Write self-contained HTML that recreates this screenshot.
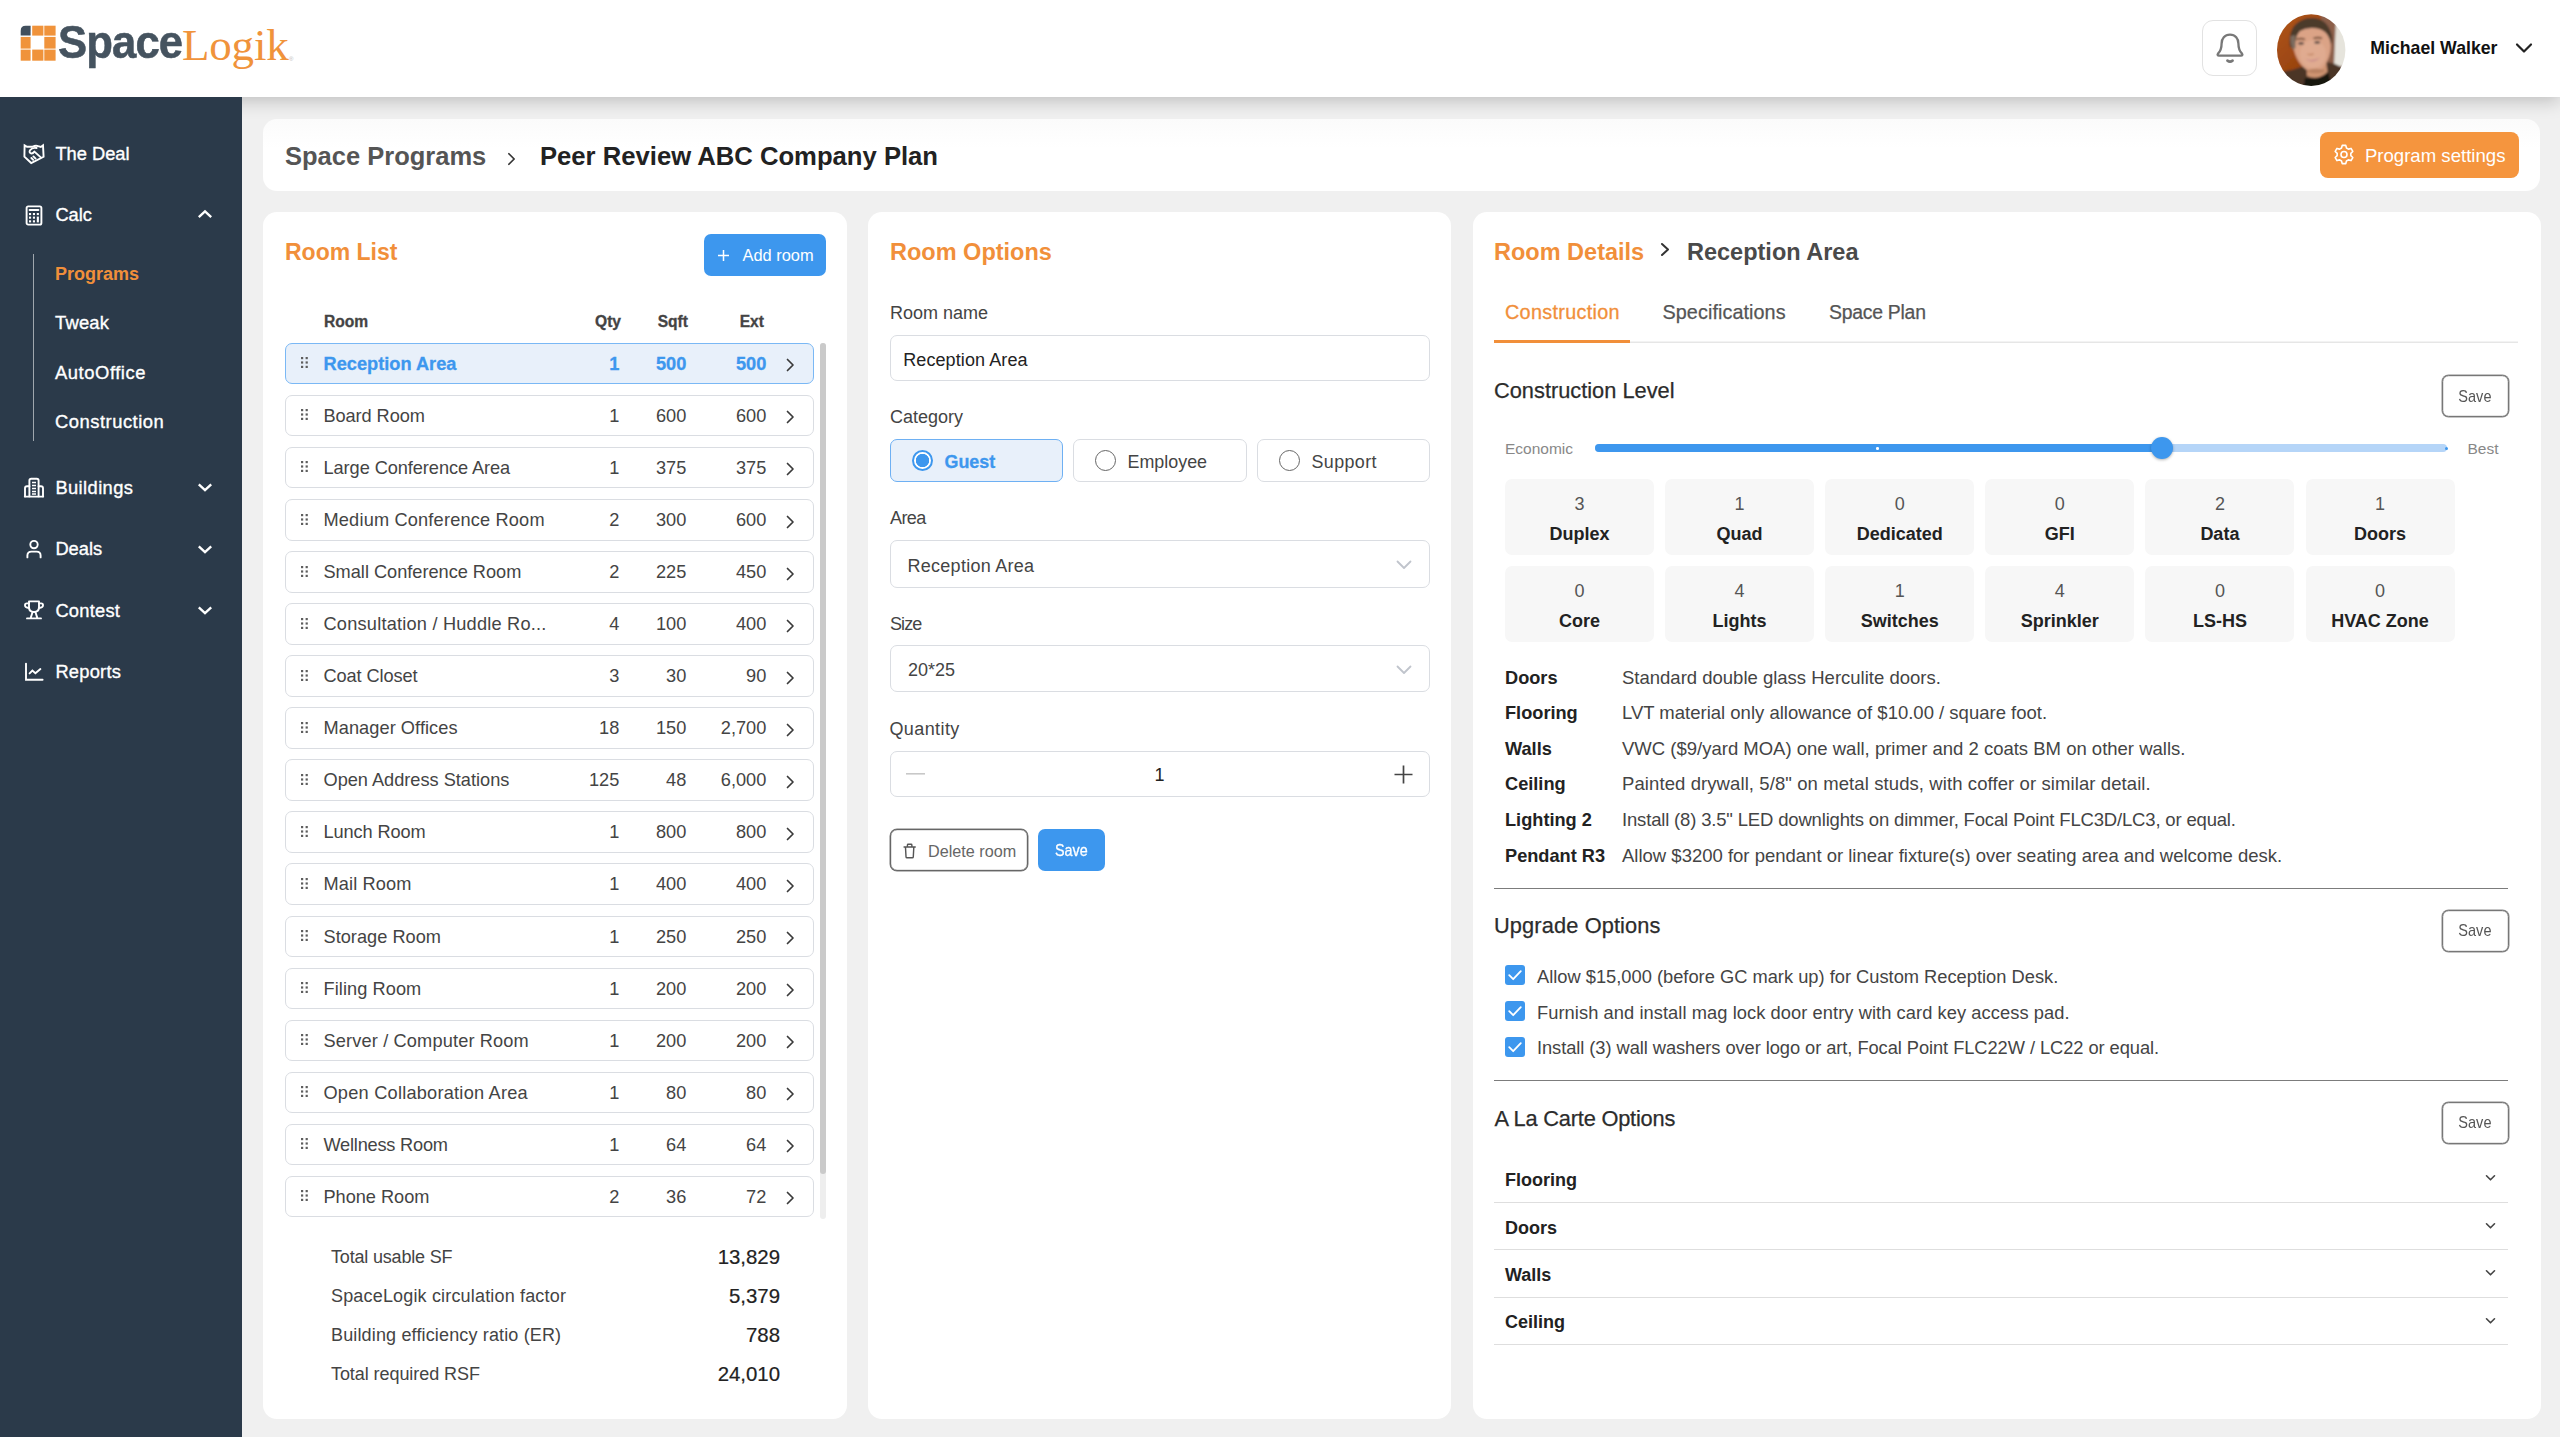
<!DOCTYPE html>
<html lang="en"><head><meta charset="utf-8"><title>SpaceLogik - Space Programs</title>
<style>
*{box-sizing:border-box;margin:0;padding:0}
html,body{width:2560px;height:1437px;overflow:hidden;background:#f0f0f0}
body{font-family:"Liberation Sans",sans-serif;color:#444;position:relative;font-size:18px}
.abs{position:absolute}
.t{position:absolute;white-space:nowrap;line-height:30px;height:30px}
#hdr{position:absolute;left:0;top:0;width:2560px;height:97px;background:#fff;box-shadow:0 4px 17px rgba(0,0,0,.21);z-index:5}
#side{position:absolute;left:0;top:97px;width:242px;height:1340px;background:#2b3a4a;z-index:6}
#side .mi{position:absolute;left:55.4px;color:#fff;font-size:18.3px;line-height:30px;height:30px;-webkit-text-stroke:.35px #fff;white-space:nowrap}
#side .sub{position:absolute;left:55px;color:#fff;font-size:18.4px;line-height:30px;height:30px;-webkit-text-stroke:.35px #fff;white-space:nowrap}
#side svg{position:absolute;overflow:visible}
.card{position:absolute;background:#fff;border-radius:14px}
.h1{position:absolute;font-weight:bold;font-size:23.5px;line-height:34px;height:34px;white-space:nowrap;color:#f18f3a}
.row{position:absolute;left:285px;width:529px;height:41.5px;border:1.5px solid #dadde2;border-radius:7px;background:#fff}
.row.sel{border-color:#7ab8f5;background:#e8f0fa;color:#3d97ee;font-weight:bold;-webkit-text-stroke:.3px #3d97ee}
.row div{position:absolute;top:0;line-height:41.6px;height:38px;white-space:nowrap;font-size:18.2px}
.row .nm{left:37.5px}
.row .q{right:193.7px}
.row .s{right:126.7px}
.row .e{right:46.7px}
.row svg{position:absolute}
.lbl{position:absolute;left:890px;font-size:18px;line-height:30px;height:30px;color:#444;white-space:nowrap}
.inp{position:absolute;left:890px;width:540px;border:1.5px solid #dadde2;border-radius:7px;background:#fff}
.radio{position:absolute;top:439px;height:43px;border:1.5px solid #dadde2;border-radius:7px;background:#fff}
.radio span{position:absolute;left:53.5px;top:0;line-height:44px;font-size:17.9px;white-space:nowrap;color:#444}
.radio i{position:absolute;left:21px;top:10px;width:21px;height:21px;border-radius:50%;border:1.5px solid #666;background:#fff}
.btnsave{position:absolute;width:67px;height:42px;border:1px solid #777;box-shadow:0 0 0 .5px #8c8c8c,inset 0 0 0 .3px #999;border-radius:6.5px;background:#fff;font-size:16.6px;line-height:40.4px;text-align:center;color:#555}
.btnsave span{display:inline-block;transform:scaleX(.875)}
.tile{position:absolute;width:149px;height:76px;background:#f7f7f7;border-radius:7px;text-align:center}
.tile b{position:absolute;left:0;right:0;top:40px;font-size:18px;line-height:30px;color:#222}
.tile span{position:absolute;left:0;right:0;top:10px;font-size:18px;line-height:30px;color:#555}
.spk{position:absolute;left:1505px;font-weight:bold;font-size:18.2px;line-height:30px;height:30px;color:#222;white-space:nowrap}
.spv{position:absolute;left:1622px;font-size:18.5px;line-height:30px;height:30px;color:#444;white-space:nowrap}
.hr{position:absolute;left:1494px;width:1014px;height:1.25px;background:#7c7c7c}
.h2{position:absolute;left:1494px;font-size:21.8px;line-height:32px;height:32px;color:#2c2c2c;white-space:nowrap;-webkit-text-stroke:.25px #2c2c2c}
.cb{position:absolute;left:1505px;width:20px;height:20px;border-radius:3px;background:#3d97ee}
.cbt{position:absolute;left:1537px;font-size:18.3px;margin-top:.8px;line-height:30px;height:30px;color:#444;white-space:nowrap}
.acc{position:absolute;left:1505px;font-weight:bold;font-size:18px;line-height:30px;height:30px;color:#222;white-space:nowrap}
.accl{position:absolute;left:1494px;width:1014px;height:1.3px;background:#dedede}
</style></head>
<body>
<div id="hdr"><svg class="abs" style="left:20px;top:25px" width="37" height="37" viewBox="0 0 37 37"><path d="M10.6 0.7 H5.7 Q0.7 0.7 0.7 5.7 V10.6 H10.6 Z" fill="#414f5d"/><rect x="12.2" y="0.7" width="11.20" height="9.90" fill="#f0933b"/><rect x="24.3" y="0.7" width="11.30" height="9.90" fill="#f0933b"/><rect x="0.7" y="11.9" width="9.90" height="11.70" fill="#f0933b"/><rect x="24.3" y="11.9" width="11.30" height="11.70" fill="#f0933b"/><rect x="0.7" y="24.6" width="9.90" height="11.10" fill="#f0933b"/><rect x="12.2" y="24.6" width="11.20" height="11.10" fill="#f0933b"/><rect x="24.3" y="24.6" width="11.30" height="11.10" fill="#f0933b"/></svg><div class="abs" style="left:57.5px;top:14px;font-size:46.5px;line-height:56px;font-weight:bold;color:#45535f;-webkit-text-stroke:.55px #45535f;letter-spacing:-.9px;transform:scaleX(.938);transform-origin:0 50%;white-space:nowrap">Space</div><div class="abs" style="left:182px;top:17px;font-family:'Liberation Serif',serif;font-size:45px;line-height:56px;color:#f0933b;letter-spacing:-.2px;white-space:nowrap">Logik</div><div class="abs" style="left:289px;top:55px;font-size:6px;line-height:8px;color:#bbb">&#174;</div><div class="abs" style="left:2202px;top:20px;width:55px;height:56px;border:1.5px solid #e2e2e2;border-radius:11px;background:#fff"></div><svg class="abs" style="left:2214px;top:31px" width="32" height="34" viewBox="0 0 32 34" fill="none" stroke="#787878" stroke-width="2.3" stroke-linecap="round" stroke-linejoin="round">
<path d="M16 3.6 C10.6 3.6 7.6 7.6 7.6 12.4 C7.6 17.6 6.6 20 4 22.6 C3.2 23.6 3.6 24.6 5 24.6 H27 C28.4 24.6 28.8 23.6 28 22.6 C25.4 20 24.4 17.6 24.4 12.4 C24.4 7.6 21.4 3.6 16 3.6 Z"/>
<path d="M13.4 29.6 Q16 31.6 18.6 29.6" stroke-width="2.6"/></svg><svg class="abs" style="left:2276px;top:14px" width="70" height="72" viewBox="0 0 70 72">
<defs><clipPath id="av"><ellipse cx="35.2" cy="36.1" rx="34.2" ry="35.9"/></clipPath>
<filter id="bl" x="-20%" y="-20%" width="140%" height="140%"><feGaussianBlur stdDeviation="1.1"/></filter>
<linearGradient id="bgl" x1="0" x2="1" y1="0" y2="1"><stop offset="0" stop-color="#b45a1c"/><stop offset=".5" stop-color="#9a4410"/><stop offset="1" stop-color="#84380a"/></linearGradient></defs>
<g clip-path="url(#av)"><g filter="url(#bl)">
<rect x="-5" y="-5" width="80" height="82" fill="url(#bgl)"/>
<path d="M44 -5 L80 -5 L80 56 L50 56 Z" fill="#8c5e4a"/>
<path d="M59.8 9 L80 9 L80 52 L58 52 Z" fill="#e6e4dc"/>
<path d="M-5 80 L-5 62 Q6 57 16 56 L31 51 L36 60 L50 48 Q60 49 66 54 L76 62 L76 80 Z" fill="#4c3628"/>
<path d="M29 64 Q40 66 52 58 L58 80 L26 80 Z" fill="#17120f"/>
<path d="M30.5 50 L50 47 L51.5 58 Q42 67 31 62 Z" fill="#cf9472"/>
<path d="M17 30 Q14 12 32 8 Q50 6 54 24 Q56 34 53 43 Q48 57 39 58.5 Q29 57.5 23 48 Q18 40 17 30 Z" fill="#dba386"/><ellipse cx="40" cy="57" rx="9" ry="2.2" fill="#b98262"/>
<ellipse cx="37" cy="40" rx="13" ry="14" fill="#e0ab90"/>
<path d="M14 33 Q11 10 30 4.5 Q50 1 55.5 20 Q57 26 55 30 Q53 19 45 15.5 Q33 12 24 17 Q19 22 19 34 Z" fill="#4b3a2c"/>
<path d="M14.5 22 Q14 30 17 36 L19.5 34 Q18.5 27 19.5 21 Z" fill="#7d6c5e"/>
<path d="M20.5 25.6 Q24.5 23.8 29 25.4 M37.5 24.6 Q42 22.8 46 24.4" stroke="#6a4630" stroke-width="1.6" fill="none"/>
<ellipse cx="25" cy="29.4" rx="3" ry="1.3" fill="#5d4c46"/><ellipse cx="41.2" cy="28.4" rx="3" ry="1.3" fill="#5d4c46"/>
<path d="M31.5 40 Q34 41.4 37.5 39.8" stroke="#c08460" stroke-width="1.4" fill="none"/>
<path d="M28.5 44.4 Q36 48 44 43.6 Q37 51 28.5 44.4Z" fill="#c98c8c"/>
</g></g></svg><div class="abs" style="left:2370.3px;top:33.2px;font-size:17.7px;line-height:30px;font-weight:bold;color:#111;white-space:nowrap">Michael Walker</div><svg class="abs" style="left:2515px;top:42px" width="18" height="12" viewBox="0 0 18 12" fill="none" stroke="#222" stroke-width="2.2" stroke-linecap="round" stroke-linejoin="round"><path d="M2 2.5 L9 9.5 L16 2.5"/></svg></div>
<div id="side"><div class="mi" style="top:41.5px">The Deal</div><div class="mi" style="top:103px">Calc</div><svg style="left:196.5px;top:112.1px" width="16" height="11" viewBox="0 0 16 10.5" fill="none" stroke="#fff" stroke-width="2.4" stroke-linecap="butt" stroke-linejoin="miter"><path d="M1.8 7.8 L8 2.2 L14.2 7.8"/></svg><div class="sub" style="top:161.5px;color:#f18f3a;font-weight:bold;-webkit-text-stroke:0;font-size:18px">Programs</div><div class="sub" style="top:210.5px;letter-spacing:.2px">Tweak</div><div class="sub" style="top:260.7px;letter-spacing:.55px">AutoOffice</div><div class="sub" style="top:309.5px;letter-spacing:.5px">Construction</div><div class="abs" style="left:32.5px;top:157px;width:1.5px;height:187px;background:rgba(255,255,255,.55)"></div><div class="mi" style="top:375.5px"><span style="letter-spacing:.42px">Buildings</span></div><svg style="left:196.5px;top:385.0px" width="16" height="11" viewBox="0 0 16 10.5" fill="none" stroke="#fff" stroke-width="2.4" stroke-linecap="butt" stroke-linejoin="miter"><path d="M1.8 2.2 L8 7.8 L14.2 2.2"/></svg><div class="mi" style="top:436.5px">Deals</div><svg style="left:196.5px;top:446.5px" width="16" height="11" viewBox="0 0 16 10.5" fill="none" stroke="#fff" stroke-width="2.4" stroke-linecap="butt" stroke-linejoin="miter"><path d="M1.8 2.2 L8 7.8 L14.2 2.2"/></svg><div class="mi" style="top:498.5px"><span style="letter-spacing:.25px">Contest</span></div><svg style="left:196.5px;top:507.79999999999995px" width="16" height="11" viewBox="0 0 16 10.5" fill="none" stroke="#fff" stroke-width="2.4" stroke-linecap="butt" stroke-linejoin="miter"><path d="M1.8 2.2 L8 7.8 L14.2 2.2"/></svg><div class="mi" style="top:560px"><span style="letter-spacing:.25px">Reports</span></div><svg style="left:23px;top:47px" width="22" height="20" viewBox="0 0 22 20" fill="none" stroke="#fff" stroke-width="1.9" stroke-linecap="round" stroke-linejoin="round">
<path d="M1.6 1.4 L4 2.8 L9.6 2.8 Q12.6 1 15.2 2.2 L17.8 3 L20 1.4 L20.6 12.8 L8.2 19 L1.4 12.6 Z" stroke-linejoin="miter"/>
<path d="M13.6 4 Q9.2 3.2 7 6.2 Q5.8 8.6 8 9.4 Q9.8 9.8 11.4 7.6 L17.8 13.4"/>
<path d="M10.4 12.4 L12.6 14.6 M8.4 14 L10.2 15.8"/></svg><svg style="left:25px;top:108px" width="18" height="21" viewBox="0 0 18 21" fill="none" stroke="#fff" stroke-width="1.9" stroke-linecap="round" stroke-linejoin="round">
<rect x="1.6" y="1.4" width="14.8" height="18.2" rx="1.6"/>
<path d="M4.6 5 H13.4" stroke-width="2"/>
<g stroke="none" fill="#fff"><rect x="4" y="8" width="2.1" height="2.1"/><rect x="7.9" y="8" width="2.1" height="2.1"/><rect x="11.8" y="8" width="2.1" height="2.1"/>
<rect x="4" y="11.6" width="2.1" height="2.1"/><rect x="7.9" y="11.6" width="2.1" height="2.1"/><rect x="11.8" y="11.6" width="2.1" height="5.8"/>
<rect x="4" y="15.3" width="2.1" height="2.1"/><rect x="7.9" y="15.3" width="2.1" height="2.1"/></g></svg><svg style="left:23px;top:380px" width="22" height="21" viewBox="0 0 22 21" fill="none" stroke="#fff" stroke-width="1.9" stroke-linecap="round" stroke-linejoin="round">
<path d="M6.4 19.4 V3.6 Q6.4 1.8 8.2 1.8 H13.8 Q15.6 1.8 15.6 3.6 V19.4"/>
<path d="M6.4 9.2 H4 Q2 9.2 2 11.2 V19.4 M15.6 9.2 H18 Q20 9.2 20 11.2 V19.4"/>
<path d="M1.8 19.6 H20.2"/>
<path d="M9 5.4 H13 M9 8.4 H13 M9 11.4 H13 M9 14.4 H13 M9 17 H13" stroke-width="1.5" stroke-linecap="butt"/></svg><svg style="left:25px;top:442px" width="18" height="20" viewBox="0 0 18 20" fill="none" stroke="#fff" stroke-width="1.9" stroke-linecap="round" stroke-linejoin="round">
<circle cx="9" cy="5.6" r="3.7"/><path d="M2.4 18.4 V16.6 Q2.4 12.6 6.4 12.6 H11.6 Q15.6 12.6 15.6 16.6 V18.4"/></svg><svg style="left:23px;top:502px" width="22" height="22" viewBox="0 0 22 22" fill="none" stroke="#fff" stroke-width="1.9" stroke-linecap="round" stroke-linejoin="round">
<path d="M6 2.4 H16 V8 Q16 13 11 13 Q6 13 6 8 Z"/>
<path d="M6 4.4 H3.8 Q2 4.4 2 6.2 Q2 8.6 6 9 M16 4.4 H18.2 Q20 4.4 20 6.2 Q20 8.6 16 9"/>
<path d="M9.6 13 L7.8 18.6 M12.4 13 L14.2 18.6 M4 19.4 H18"/></svg><svg style="left:24px;top:565px" width="20" height="20" viewBox="0 0 20 20" fill="none" stroke="#fff" stroke-width="1.9" stroke-linecap="round" stroke-linejoin="round">
<path d="M2 1.6 V17.8 H18.6" stroke-linejoin="miter"/><path d="M5.6 11.4 L8.4 8.6 L11.4 11.2 L16.4 7" stroke-linejoin="miter"/></svg></div>
<div class="card" style="left:263px;top:118.6px;width:2277px;height:72.6px;background:linear-gradient(#fbfbfb,#fff 40%)"></div>
<div class="abs" style="left:285px;top:138.6px;font-size:25.5px;line-height:34px;font-weight:bold;color:#555;white-space:nowrap">Space Programs</div>
<svg class="abs" style="left:507px;top:151.5px" width="9" height="14" viewBox="0 0 10 16" fill="none" stroke="#333" stroke-width="2" stroke-linecap="round" stroke-linejoin="round"><path d="M2 2 L8 8 L2 14"/></svg>
<div class="abs" style="left:540px;top:138.6px;font-size:25.65px;line-height:34px;font-weight:bold;color:#222;white-space:nowrap">Peer Review ABC Company Plan</div>
<div class="abs" style="left:2320px;top:132px;width:199px;height:46px;border-radius:8px;background:#f5953e"></div>
<svg class="abs" style="left:2333.7px;top:144.2px" width="20" height="21" viewBox="0 0 20 21" fill="none" stroke="#fff" stroke-width="1.6" stroke-linejoin="round">
<path d="M7.53 4.06 L8.23 1.37 L11.77 1.37 L12.47 4.06 L14.34 5.14 L17.02 4.40 L18.79 7.47 L16.82 9.42 L16.82 11.58 L18.79 13.53 L17.02 16.60 L14.34 15.86 L12.47 16.94 L11.77 19.63 L8.23 19.63 L7.53 16.94 L5.66 15.86 L2.98 16.60 L1.21 13.53 L3.18 11.58 L3.18 9.42 L1.21 7.47 L2.98 4.40 L5.66 5.14 Z"/><circle cx="10" cy="10.5" r="3"/></svg>
<div class="abs" style="left:2364.9px;top:140px;font-size:18.6px;line-height:32px;color:#fff;white-space:nowrap">Program settings</div>
<div class="card" style="left:263px;top:212.3px;width:584px;height:1207px"></div>
<div class="h1" style="left:285px;top:234.8px;font-size:23px">Room List</div>
<div class="abs" style="left:703.5px;top:234px;width:122px;height:42px;border-radius:7px;background:#3d97ee"></div>
<svg class="abs" style="left:717px;top:249px" width="13" height="13" viewBox="0 0 13 13" stroke="#fff" stroke-width="1.5"><path d="M6.5 1 V12 M1 6.5 H12"/></svg>
<div class="abs" style="left:742.5px;top:240px;font-size:16.4px;line-height:30px;color:#fff;white-space:nowrap">Add room</div>
<div class="t" style="left:324px;top:307.0px;font-weight:bold;font-size:15.6px;color:#444;-webkit-text-stroke:.3px #444">Room</div>
<div class="t" style="left:520px;width:101px;text-align:right;top:307px;font-weight:bold;font-size:15.6px;color:#444;-webkit-text-stroke:.3px #444">Qty</div>
<div class="t" style="left:588px;width:100px;text-align:right;top:307px;font-weight:bold;font-size:15.6px;color:#444;-webkit-text-stroke:.3px #444">Sqft</div>
<div class="t" style="left:664px;width:100px;text-align:right;top:307px;font-weight:bold;font-size:15.6px;color:#444;-webkit-text-stroke:.3px #444">Ext</div>
<div class="row sel" style="top:342.8px"><svg style="left:15px;top:13.5px" width="7" height="11" viewBox="0 0 7 11" fill="#5e5e5e"><rect x="0" y="0" width="2.2" height="2.2"/><rect x="0" y="4.4" width="2.2" height="2.2"/><rect x="0" y="8.8" width="2.2" height="2.2"/><rect x="4.6" y="0" width="2.2" height="2.2"/><rect x="4.6" y="4.4" width="2.2" height="2.2"/><rect x="4.6" y="8.8" width="2.2" height="2.2"/></svg><div class="nm" style="letter-spacing:0.014px">Reception Area</div><div class="q">1</div><div class="s">500</div><div class="e">500</div><svg style="left:500px;top:14.5px" width="9" height="14" viewBox="0 0 9 14" fill="none" stroke="#3a3a3a" stroke-width="1.7" stroke-linecap="round" stroke-linejoin="round"><path d="M1.5 1.5 L7 7 L1.5 12.5"/></svg></div>
<div class="row" style="top:394.9px"><svg style="left:15px;top:13.5px" width="7" height="11" viewBox="0 0 7 11" fill="#5e5e5e"><rect x="0" y="0" width="2.2" height="2.2"/><rect x="0" y="4.4" width="2.2" height="2.2"/><rect x="0" y="8.8" width="2.2" height="2.2"/><rect x="4.6" y="0" width="2.2" height="2.2"/><rect x="4.6" y="4.4" width="2.2" height="2.2"/><rect x="4.6" y="8.8" width="2.2" height="2.2"/></svg><div class="nm" style="letter-spacing:-0.08px">Board Room</div><div class="q">1</div><div class="s">600</div><div class="e">600</div><svg style="left:500px;top:14.5px" width="9" height="14" viewBox="0 0 9 14" fill="none" stroke="#3a3a3a" stroke-width="1.7" stroke-linecap="round" stroke-linejoin="round"><path d="M1.5 1.5 L7 7 L1.5 12.5"/></svg></div>
<div class="row" style="top:446.9px"><svg style="left:15px;top:13.5px" width="7" height="11" viewBox="0 0 7 11" fill="#5e5e5e"><rect x="0" y="0" width="2.2" height="2.2"/><rect x="0" y="4.4" width="2.2" height="2.2"/><rect x="0" y="8.8" width="2.2" height="2.2"/><rect x="4.6" y="0" width="2.2" height="2.2"/><rect x="4.6" y="4.4" width="2.2" height="2.2"/><rect x="4.6" y="8.8" width="2.2" height="2.2"/></svg><div class="nm" style="letter-spacing:-0.067px">Large Conference Area</div><div class="q">1</div><div class="s">375</div><div class="e">375</div><svg style="left:500px;top:14.5px" width="9" height="14" viewBox="0 0 9 14" fill="none" stroke="#3a3a3a" stroke-width="1.7" stroke-linecap="round" stroke-linejoin="round"><path d="M1.5 1.5 L7 7 L1.5 12.5"/></svg></div>
<div class="row" style="top:499.0px"><svg style="left:15px;top:13.5px" width="7" height="11" viewBox="0 0 7 11" fill="#5e5e5e"><rect x="0" y="0" width="2.2" height="2.2"/><rect x="0" y="4.4" width="2.2" height="2.2"/><rect x="0" y="8.8" width="2.2" height="2.2"/><rect x="4.6" y="0" width="2.2" height="2.2"/><rect x="4.6" y="4.4" width="2.2" height="2.2"/><rect x="4.6" y="8.8" width="2.2" height="2.2"/></svg><div class="nm" style="letter-spacing:0.177px">Medium Conference Room</div><div class="q">2</div><div class="s">300</div><div class="e">600</div><svg style="left:500px;top:14.5px" width="9" height="14" viewBox="0 0 9 14" fill="none" stroke="#3a3a3a" stroke-width="1.7" stroke-linecap="round" stroke-linejoin="round"><path d="M1.5 1.5 L7 7 L1.5 12.5"/></svg></div>
<div class="row" style="top:551.0px"><svg style="left:15px;top:13.5px" width="7" height="11" viewBox="0 0 7 11" fill="#5e5e5e"><rect x="0" y="0" width="2.2" height="2.2"/><rect x="0" y="4.4" width="2.2" height="2.2"/><rect x="0" y="8.8" width="2.2" height="2.2"/><rect x="4.6" y="0" width="2.2" height="2.2"/><rect x="4.6" y="4.4" width="2.2" height="2.2"/><rect x="4.6" y="8.8" width="2.2" height="2.2"/></svg><div class="nm" style="letter-spacing:-0.014px">Small Conference Room</div><div class="q">2</div><div class="s">225</div><div class="e">450</div><svg style="left:500px;top:14.5px" width="9" height="14" viewBox="0 0 9 14" fill="none" stroke="#3a3a3a" stroke-width="1.7" stroke-linecap="round" stroke-linejoin="round"><path d="M1.5 1.5 L7 7 L1.5 12.5"/></svg></div>
<div class="row" style="top:603.1px"><svg style="left:15px;top:13.5px" width="7" height="11" viewBox="0 0 7 11" fill="#5e5e5e"><rect x="0" y="0" width="2.2" height="2.2"/><rect x="0" y="4.4" width="2.2" height="2.2"/><rect x="0" y="8.8" width="2.2" height="2.2"/><rect x="4.6" y="0" width="2.2" height="2.2"/><rect x="4.6" y="4.4" width="2.2" height="2.2"/><rect x="4.6" y="8.8" width="2.2" height="2.2"/></svg><div class="nm" style="letter-spacing:0.211px">Consultation / Huddle Ro...</div><div class="q">4</div><div class="s">100</div><div class="e">400</div><svg style="left:500px;top:14.5px" width="9" height="14" viewBox="0 0 9 14" fill="none" stroke="#3a3a3a" stroke-width="1.7" stroke-linecap="round" stroke-linejoin="round"><path d="M1.5 1.5 L7 7 L1.5 12.5"/></svg></div>
<div class="row" style="top:655.2px"><svg style="left:15px;top:13.5px" width="7" height="11" viewBox="0 0 7 11" fill="#5e5e5e"><rect x="0" y="0" width="2.2" height="2.2"/><rect x="0" y="4.4" width="2.2" height="2.2"/><rect x="0" y="8.8" width="2.2" height="2.2"/><rect x="4.6" y="0" width="2.2" height="2.2"/><rect x="4.6" y="4.4" width="2.2" height="2.2"/><rect x="4.6" y="8.8" width="2.2" height="2.2"/></svg><div class="nm" style="letter-spacing:-0.091px">Coat Closet</div><div class="q">3</div><div class="s">30</div><div class="e">90</div><svg style="left:500px;top:14.5px" width="9" height="14" viewBox="0 0 9 14" fill="none" stroke="#3a3a3a" stroke-width="1.7" stroke-linecap="round" stroke-linejoin="round"><path d="M1.5 1.5 L7 7 L1.5 12.5"/></svg></div>
<div class="row" style="top:707.2px"><svg style="left:15px;top:13.5px" width="7" height="11" viewBox="0 0 7 11" fill="#5e5e5e"><rect x="0" y="0" width="2.2" height="2.2"/><rect x="0" y="4.4" width="2.2" height="2.2"/><rect x="0" y="8.8" width="2.2" height="2.2"/><rect x="4.6" y="0" width="2.2" height="2.2"/><rect x="4.6" y="4.4" width="2.2" height="2.2"/><rect x="4.6" y="8.8" width="2.2" height="2.2"/></svg><div class="nm" style="letter-spacing:0.067px">Manager Offices</div><div class="q">18</div><div class="s">150</div><div class="e">2,700</div><svg style="left:500px;top:14.5px" width="9" height="14" viewBox="0 0 9 14" fill="none" stroke="#3a3a3a" stroke-width="1.7" stroke-linecap="round" stroke-linejoin="round"><path d="M1.5 1.5 L7 7 L1.5 12.5"/></svg></div>
<div class="row" style="top:759.3px"><svg style="left:15px;top:13.5px" width="7" height="11" viewBox="0 0 7 11" fill="#5e5e5e"><rect x="0" y="0" width="2.2" height="2.2"/><rect x="0" y="4.4" width="2.2" height="2.2"/><rect x="0" y="8.8" width="2.2" height="2.2"/><rect x="4.6" y="0" width="2.2" height="2.2"/><rect x="4.6" y="4.4" width="2.2" height="2.2"/><rect x="4.6" y="8.8" width="2.2" height="2.2"/></svg><div class="nm" style="letter-spacing:-0.01px">Open Address Stations</div><div class="q">125</div><div class="s">48</div><div class="e">6,000</div><svg style="left:500px;top:14.5px" width="9" height="14" viewBox="0 0 9 14" fill="none" stroke="#3a3a3a" stroke-width="1.7" stroke-linecap="round" stroke-linejoin="round"><path d="M1.5 1.5 L7 7 L1.5 12.5"/></svg></div>
<div class="row" style="top:811.3px"><svg style="left:15px;top:13.5px" width="7" height="11" viewBox="0 0 7 11" fill="#5e5e5e"><rect x="0" y="0" width="2.2" height="2.2"/><rect x="0" y="4.4" width="2.2" height="2.2"/><rect x="0" y="8.8" width="2.2" height="2.2"/><rect x="4.6" y="0" width="2.2" height="2.2"/><rect x="4.6" y="4.4" width="2.2" height="2.2"/><rect x="4.6" y="8.8" width="2.2" height="2.2"/></svg><div class="nm" style="letter-spacing:-0.11px">Lunch Room</div><div class="q">1</div><div class="s">800</div><div class="e">800</div><svg style="left:500px;top:14.5px" width="9" height="14" viewBox="0 0 9 14" fill="none" stroke="#3a3a3a" stroke-width="1.7" stroke-linecap="round" stroke-linejoin="round"><path d="M1.5 1.5 L7 7 L1.5 12.5"/></svg></div>
<div class="row" style="top:863.4px"><svg style="left:15px;top:13.5px" width="7" height="11" viewBox="0 0 7 11" fill="#5e5e5e"><rect x="0" y="0" width="2.2" height="2.2"/><rect x="0" y="4.4" width="2.2" height="2.2"/><rect x="0" y="8.8" width="2.2" height="2.2"/><rect x="4.6" y="0" width="2.2" height="2.2"/><rect x="4.6" y="4.4" width="2.2" height="2.2"/><rect x="4.6" y="8.8" width="2.2" height="2.2"/></svg><div class="nm" style="letter-spacing:0.122px">Mail Room</div><div class="q">1</div><div class="s">400</div><div class="e">400</div><svg style="left:500px;top:14.5px" width="9" height="14" viewBox="0 0 9 14" fill="none" stroke="#3a3a3a" stroke-width="1.7" stroke-linecap="round" stroke-linejoin="round"><path d="M1.5 1.5 L7 7 L1.5 12.5"/></svg></div>
<div class="row" style="top:915.5px"><svg style="left:15px;top:13.5px" width="7" height="11" viewBox="0 0 7 11" fill="#5e5e5e"><rect x="0" y="0" width="2.2" height="2.2"/><rect x="0" y="4.4" width="2.2" height="2.2"/><rect x="0" y="8.8" width="2.2" height="2.2"/><rect x="4.6" y="0" width="2.2" height="2.2"/><rect x="4.6" y="4.4" width="2.2" height="2.2"/><rect x="4.6" y="8.8" width="2.2" height="2.2"/></svg><div class="nm" style="letter-spacing:0.021px">Storage Room</div><div class="q">1</div><div class="s">250</div><div class="e">250</div><svg style="left:500px;top:14.5px" width="9" height="14" viewBox="0 0 9 14" fill="none" stroke="#3a3a3a" stroke-width="1.7" stroke-linecap="round" stroke-linejoin="round"><path d="M1.5 1.5 L7 7 L1.5 12.5"/></svg></div>
<div class="row" style="top:967.5px"><svg style="left:15px;top:13.5px" width="7" height="11" viewBox="0 0 7 11" fill="#5e5e5e"><rect x="0" y="0" width="2.2" height="2.2"/><rect x="0" y="4.4" width="2.2" height="2.2"/><rect x="0" y="8.8" width="2.2" height="2.2"/><rect x="4.6" y="0" width="2.2" height="2.2"/><rect x="4.6" y="4.4" width="2.2" height="2.2"/><rect x="4.6" y="8.8" width="2.2" height="2.2"/></svg><div class="nm" style="letter-spacing:0.068px">Filing Room</div><div class="q">1</div><div class="s">200</div><div class="e">200</div><svg style="left:500px;top:14.5px" width="9" height="14" viewBox="0 0 9 14" fill="none" stroke="#3a3a3a" stroke-width="1.7" stroke-linecap="round" stroke-linejoin="round"><path d="M1.5 1.5 L7 7 L1.5 12.5"/></svg></div>
<div class="row" style="top:1019.6px"><svg style="left:15px;top:13.5px" width="7" height="11" viewBox="0 0 7 11" fill="#5e5e5e"><rect x="0" y="0" width="2.2" height="2.2"/><rect x="0" y="4.4" width="2.2" height="2.2"/><rect x="0" y="8.8" width="2.2" height="2.2"/><rect x="4.6" y="0" width="2.2" height="2.2"/><rect x="4.6" y="4.4" width="2.2" height="2.2"/><rect x="4.6" y="8.8" width="2.2" height="2.2"/></svg><div class="nm" style="letter-spacing:0.148px">Server / Computer Room</div><div class="q">1</div><div class="s">200</div><div class="e">200</div><svg style="left:500px;top:14.5px" width="9" height="14" viewBox="0 0 9 14" fill="none" stroke="#3a3a3a" stroke-width="1.7" stroke-linecap="round" stroke-linejoin="round"><path d="M1.5 1.5 L7 7 L1.5 12.5"/></svg></div>
<div class="row" style="top:1071.6px"><svg style="left:15px;top:13.5px" width="7" height="11" viewBox="0 0 7 11" fill="#5e5e5e"><rect x="0" y="0" width="2.2" height="2.2"/><rect x="0" y="4.4" width="2.2" height="2.2"/><rect x="0" y="8.8" width="2.2" height="2.2"/><rect x="4.6" y="0" width="2.2" height="2.2"/><rect x="4.6" y="4.4" width="2.2" height="2.2"/><rect x="4.6" y="8.8" width="2.2" height="2.2"/></svg><div class="nm" style="letter-spacing:0.228px">Open Collaboration Area</div><div class="q">1</div><div class="s">80</div><div class="e">80</div><svg style="left:500px;top:14.5px" width="9" height="14" viewBox="0 0 9 14" fill="none" stroke="#3a3a3a" stroke-width="1.7" stroke-linecap="round" stroke-linejoin="round"><path d="M1.5 1.5 L7 7 L1.5 12.5"/></svg></div>
<div class="row" style="top:1123.7px"><svg style="left:15px;top:13.5px" width="7" height="11" viewBox="0 0 7 11" fill="#5e5e5e"><rect x="0" y="0" width="2.2" height="2.2"/><rect x="0" y="4.4" width="2.2" height="2.2"/><rect x="0" y="8.8" width="2.2" height="2.2"/><rect x="4.6" y="0" width="2.2" height="2.2"/><rect x="4.6" y="4.4" width="2.2" height="2.2"/><rect x="4.6" y="8.8" width="2.2" height="2.2"/></svg><div class="nm" style="letter-spacing:-0.215px">Wellness Room</div><div class="q">1</div><div class="s">64</div><div class="e">64</div><svg style="left:500px;top:14.5px" width="9" height="14" viewBox="0 0 9 14" fill="none" stroke="#3a3a3a" stroke-width="1.7" stroke-linecap="round" stroke-linejoin="round"><path d="M1.5 1.5 L7 7 L1.5 12.5"/></svg></div>
<div class="row" style="top:1175.8px"><svg style="left:15px;top:13.5px" width="7" height="11" viewBox="0 0 7 11" fill="#5e5e5e"><rect x="0" y="0" width="2.2" height="2.2"/><rect x="0" y="4.4" width="2.2" height="2.2"/><rect x="0" y="8.8" width="2.2" height="2.2"/><rect x="4.6" y="0" width="2.2" height="2.2"/><rect x="4.6" y="4.4" width="2.2" height="2.2"/><rect x="4.6" y="8.8" width="2.2" height="2.2"/></svg><div class="nm" style="letter-spacing:-0.03px">Phone Room</div><div class="q">2</div><div class="s">36</div><div class="e">72</div><svg style="left:500px;top:14.5px" width="9" height="14" viewBox="0 0 9 14" fill="none" stroke="#3a3a3a" stroke-width="1.7" stroke-linecap="round" stroke-linejoin="round"><path d="M1.5 1.5 L7 7 L1.5 12.5"/></svg></div>
<div class="abs" style="left:819.7px;top:343px;width:6px;height:876px;background:#eee;border-radius:3px"></div>
<div class="abs" style="left:819.7px;top:343px;width:6px;height:831px;background:#cacaca;border-radius:3px"></div>
<div class="t" style="left:331px;top:1242.0px;font-size:18px;color:#444;letter-spacing:-0.18px">Total usable SF</div>
<div class="t" style="left:600px;width:180px;text-align:right;top:1242px;font-size:20.4px;color:#222;-webkit-text-stroke:.2px #222">13,829</div>
<div class="t" style="left:331px;top:1281.0px;font-size:18px;color:#444;letter-spacing:0.17px">SpaceLogik circulation factor</div>
<div class="t" style="left:600px;width:180px;text-align:right;top:1281px;font-size:20.4px;color:#222;-webkit-text-stroke:.2px #222">5,379</div>
<div class="t" style="left:331px;top:1320.0px;font-size:18px;color:#444;letter-spacing:0.15px">Building efficiency ratio (ER)</div>
<div class="t" style="left:600px;width:180px;text-align:right;top:1320px;font-size:20.4px;color:#222;-webkit-text-stroke:.2px #222">788</div>
<div class="t" style="left:331px;top:1359.0px;font-size:18px;color:#444;letter-spacing:-0.07px">Total required RSF</div>
<div class="t" style="left:600px;width:180px;text-align:right;top:1359px;font-size:20.4px;color:#222;-webkit-text-stroke:.2px #222">24,010</div>
<div class="card" style="left:868px;top:212.3px;width:583px;height:1207px"></div>
<div class="h1" style="left:890px;top:234.8px">Room Options</div>
<div class="lbl" style="top:298px">Room name</div>
<div class="inp" style="top:334.5px;height:46px"></div>
<div class="t" style="left:903.2px;top:344.9px;font-size:18px;color:#222;letter-spacing:.1px">Reception Area</div>
<div class="lbl" style="top:402px">Category</div>
<div class="radio" style="left:890px;width:172.8px;border-color:#6eb0f3;background:#e8f0fa"><i style="border-width:2px;border-color:#3d97ee;background:radial-gradient(circle,#3d97ee 0 6.3px,#fff 7px)"></i><span style="color:#3d97ee;font-weight:bold;-webkit-text-stroke:.3px #3d97ee">Guest</span></div>
<div class="radio" style="left:1073px;width:173.6px"><i></i><span>Employee</span></div>
<div class="radio" style="left:1257px;width:173px"><i></i><span style="letter-spacing:.38px">Support</span></div>
<div class="lbl" style="top:503px;letter-spacing:-.6px">Area</div>
<div class="inp" style="top:540px;height:47.5px"></div>
<div class="t" style="left:907.6px;top:550.9px;font-size:18px;color:#444;letter-spacing:.25px">Reception Area</div>
<svg class="abs" style="left:1396px;top:560px" width="16" height="10" viewBox="0 0 16 10" fill="none" stroke="#c0c4cc" stroke-width="1.8" stroke-linecap="round" stroke-linejoin="round"><path d="M1.5 1.5 L8 8 L14.5 1.5"/></svg>
<div class="lbl" style="top:609px;letter-spacing:-.9px">Size</div>
<div class="inp" style="top:644.8px;height:47.5px"></div>
<div class="t" style="left:908px;top:655.0px;font-size:18px;color:#444">20*25</div>
<svg class="abs" style="left:1396px;top:665px" width="16" height="10" viewBox="0 0 16 10" fill="none" stroke="#c0c4cc" stroke-width="1.8" stroke-linecap="round" stroke-linejoin="round"><path d="M1.5 1.5 L8 8 L14.5 1.5"/></svg>
<div class="lbl" style="top:714px;left:889.4px;letter-spacing:.42px">Quantity</div>
<div class="inp" style="top:751px;height:45.5px"></div>
<svg class="abs" style="left:906px;top:773px" width="19" height="2" viewBox="0 0 19 2"><rect width="19" height="1.6" fill="#c8c8c8"/></svg>
<svg class="abs" style="left:1394px;top:764.5px" width="19" height="19" viewBox="0 0 19 19" stroke="#444" stroke-width="1.7"><path d="M9.5 .5 V18.5 M.5 9.5 H18.5"/></svg>
<div class="t" style="left:1154.5px;top:760.0px;font-size:18px;color:#222">1</div>
<div class="abs" style="left:890px;top:829px;width:138px;height:42px;border:1px solid #666;box-shadow:0 0 0 .5px #7a7a7a,inset 0 0 0 .3px #999;border-radius:7px;background:#fff"></div>
<svg class="abs" style="left:903px;top:842.5px" width="13.3" height="16" viewBox="0 0 15 18" fill="none" stroke="#555" stroke-width="1.6" stroke-linejoin="round" stroke-linecap="round"><path d="M1.2 4.4 H13.8 M5 4 V2.2 Q5 1.4 5.8 1.4 H9.2 Q10 1.4 10 2.2 V4 M2.8 4.6 L3.4 15.6 Q3.5 16.6 4.5 16.6 H10.5 Q11.5 16.6 11.6 15.6 L12.2 4.6"/></svg>
<div class="t" style="left:928px;top:835.5px;font-size:16.2px;color:#666">Delete room</div>
<div class="abs" style="left:1038px;top:829px;width:67px;height:42px;border-radius:7px;background:#3d97ee"></div>
<div class="t" style="left:1054.8px;top:836.2px;font-size:16.6px;transform:scaleX(.865);transform-origin:0 50%;color:#fff;-webkit-text-stroke:.3px #fff">Save</div>
<div class="card" style="left:1473px;top:212.3px;width:1067.8px;height:1207px"></div>
<div class="h1" style="left:1494px;top:234.8px">Room Details</div>
<svg class="abs" style="left:1660px;top:242px" width="10" height="15" viewBox="0 0 10 15" fill="none" stroke="#333" stroke-width="2" stroke-linecap="round" stroke-linejoin="round"><path d="M2 2 L8 7.5 L2 13"/></svg>
<div class="h1" style="left:1687px;top:234.8px;color:#4a4a4a">Reception Area</div>
<div class="abs" style="left:1494px;top:341px;width:1024px;height:2px;background:linear-gradient(#f3f3f3 0 50%,#e6e6e6 50% 100%)"></div>
<div class="abs" style="left:1494px;top:340px;width:136px;height:3px;background:#f18f3a"></div>
<div class="t" style="left:1505px;top:297.0px;font-size:19.8px;letter-spacing:.32px;color:#f18f3a;-webkit-text-stroke:.3px #f18f3a">Construction</div>
<div class="t" style="left:1662.5px;top:297.0px;font-size:19.8px;letter-spacing:.08px;color:#555;-webkit-text-stroke:.25px #555">Specifications</div>
<div class="t" style="left:1829px;top:297.0px;font-size:19.4px;letter-spacing:-.25px;color:#555;-webkit-text-stroke:.25px #555">Space Plan</div>
<div class="h2" style="top:375px">Construction Level</div>
<div class="btnsave" style="left:2441.7px;top:375px;line-height:42px"><span>Save</span></div>
<div class="t" style="left:1505px;top:433.5px;font-size:15.5px;color:#888">Economic</div>
<div class="abs" style="left:1595px;top:444px;width:852px;height:8px;border-radius:4px;background:#b5d5f8"></div>
<div class="abs" style="left:1595px;top:444px;width:566px;height:8px;border-radius:4px;background:#3d97ee"></div>
<div class="abs" style="left:2150.7px;top:437px;width:22px;height:22px;border-radius:50%;background:#3d97ee;box-shadow:0 1px 3px rgba(0,0,0,.3)"></div>
<div class="abs" style="left:1876px;top:447px;width:2.5px;height:2.5px;border-radius:50%;background:#fff"></div>
<div class="abs" style="left:2444.5px;top:446.5px;width:3px;height:3px;border-radius:50%;background:#3d97ee"></div>
<div class="t" style="left:2467.5px;top:433.5px;font-size:15.5px;color:#888">Best</div>
<div class="tile" style="left:1505.0px;top:478.7px"><span>3</span><b>Duplex</b></div>
<div class="tile" style="left:1665.1px;top:478.7px"><span>1</span><b>Quad</b></div>
<div class="tile" style="left:1825.2px;top:478.7px"><span>0</span><b>Dedicated</b></div>
<div class="tile" style="left:1985.3px;top:478.7px"><span>0</span><b>GFI</b></div>
<div class="tile" style="left:2145.4px;top:478.7px"><span>2</span><b>Data</b></div>
<div class="tile" style="left:2305.5px;top:478.7px"><span>1</span><b>Doors</b></div>
<div class="tile" style="left:1505.0px;top:565.7px"><span>0</span><b>Core</b></div>
<div class="tile" style="left:1665.1px;top:565.7px"><span>4</span><b>Lights</b></div>
<div class="tile" style="left:1825.2px;top:565.7px"><span>1</span><b>Switches</b></div>
<div class="tile" style="left:1985.3px;top:565.7px"><span>4</span><b>Sprinkler</b></div>
<div class="tile" style="left:2145.4px;top:565.7px"><span>0</span><b>LS-HS</b></div>
<div class="tile" style="left:2305.5px;top:565.7px"><span>0</span><b>HVAC Zone</b></div>
<div class="spk" style="top:662.5px">Doors</div><div class="spv" style="top:662.5px;letter-spacing:0px">Standard double glass Herculite doors.</div>
<div class="spk" style="top:698.1px">Flooring</div><div class="spv" style="top:698.1px;letter-spacing:0px">LVT material only allowance of $10.00 / square foot.</div>
<div class="spk" style="top:733.7px">Walls</div><div class="spv" style="top:733.7px;letter-spacing:0px">VWC ($9/yard MOA) one wall, primer and 2 coats BM on other walls.</div>
<div class="spk" style="top:769.3px">Ceiling</div><div class="spv" style="top:769.3px;letter-spacing:0.094px">Painted drywall, 5/8" on metal studs, with coffer or similar detail.</div>
<div class="spk" style="top:804.9px">Lighting 2</div><div class="spv" style="top:804.9px;letter-spacing:-0.171px">Install (8) 3.5" LED downlights on dimmer, Focal Point FLC3D/LC3, or equal.</div>
<div class="spk" style="top:840.5px">Pendant R3</div><div class="spv" style="top:840.5px;letter-spacing:0px">Allow $3200 for pendant or linear fixture(s) over seating area and welcome desk.</div>
<div class="hr" style="top:887.5px"></div>
<div class="h2" style="top:910px;letter-spacing:.12px">Upgrade Options</div>
<div class="btnsave" style="left:2441.7px;top:910px"><span>Save</span></div>
<div class="cb" style="top:965.0px"><svg width="20" height="20" viewBox="0 0 20 20" fill="none" stroke="#fff" stroke-width="1.8" stroke-linecap="round" stroke-linejoin="round"><path d="M4.2 10.2 L8.2 14.2 L15.8 6.2"/></svg></div><div class="cbt" style="top:961.2px;letter-spacing:0px">Allow $15,000 (before GC mark up) for Custom Reception Desk.</div>
<div class="cb" style="top:1000.9px"><svg width="20" height="20" viewBox="0 0 20 20" fill="none" stroke="#fff" stroke-width="1.8" stroke-linecap="round" stroke-linejoin="round"><path d="M4.2 10.2 L8.2 14.2 L15.8 6.2"/></svg></div><div class="cbt" style="top:997.1px;letter-spacing:0.065px">Furnish and install mag lock door entry with card key access pad.</div>
<div class="cb" style="top:1036.8px"><svg width="20" height="20" viewBox="0 0 20 20" fill="none" stroke="#fff" stroke-width="1.8" stroke-linecap="round" stroke-linejoin="round"><path d="M4.2 10.2 L8.2 14.2 L15.8 6.2"/></svg></div><div class="cbt" style="top:1032.6px;letter-spacing:-0.063px">Install (3) wall washers over logo or art, Focal Point FLC22W / LC22 or equal.</div>
<div class="hr" style="top:1080px"></div>
<div class="h2" style="top:1102.5px;left:1494.6px;letter-spacing:-.2px">A La Carte Options</div>
<div class="btnsave" style="left:2441.7px;top:1101.8px"><span>Save</span></div>
<div class="acc" style="top:1164.5px">Flooring</div><div class="accl" style="top:1202px"></div>
<svg class="abs" style="left:2484.5px;top:1174.0px" width="11" height="8" viewBox="0 0 11 8" fill="none" stroke="#444" stroke-width="1.6" stroke-linecap="round" stroke-linejoin="round"><path d="M1.5 1.8 L5.5 5.8 L9.5 1.8"/></svg>
<div class="acc" style="top:1212.5px">Doors</div><div class="accl" style="top:1249px"></div>
<svg class="abs" style="left:2484.5px;top:1222.0px" width="11" height="8" viewBox="0 0 11 8" fill="none" stroke="#444" stroke-width="1.6" stroke-linecap="round" stroke-linejoin="round"><path d="M1.5 1.8 L5.5 5.8 L9.5 1.8"/></svg>
<div class="acc" style="top:1259.5px">Walls</div><div class="accl" style="top:1297px"></div>
<svg class="abs" style="left:2484.5px;top:1269.0px" width="11" height="8" viewBox="0 0 11 8" fill="none" stroke="#444" stroke-width="1.6" stroke-linecap="round" stroke-linejoin="round"><path d="M1.5 1.8 L5.5 5.8 L9.5 1.8"/></svg>
<div class="acc" style="top:1307px">Ceiling</div><div class="accl" style="top:1344px"></div>
<svg class="abs" style="left:2484.5px;top:1316.5px" width="11" height="8" viewBox="0 0 11 8" fill="none" stroke="#444" stroke-width="1.6" stroke-linecap="round" stroke-linejoin="round"><path d="M1.5 1.8 L5.5 5.8 L9.5 1.8"/></svg>
</body></html>
